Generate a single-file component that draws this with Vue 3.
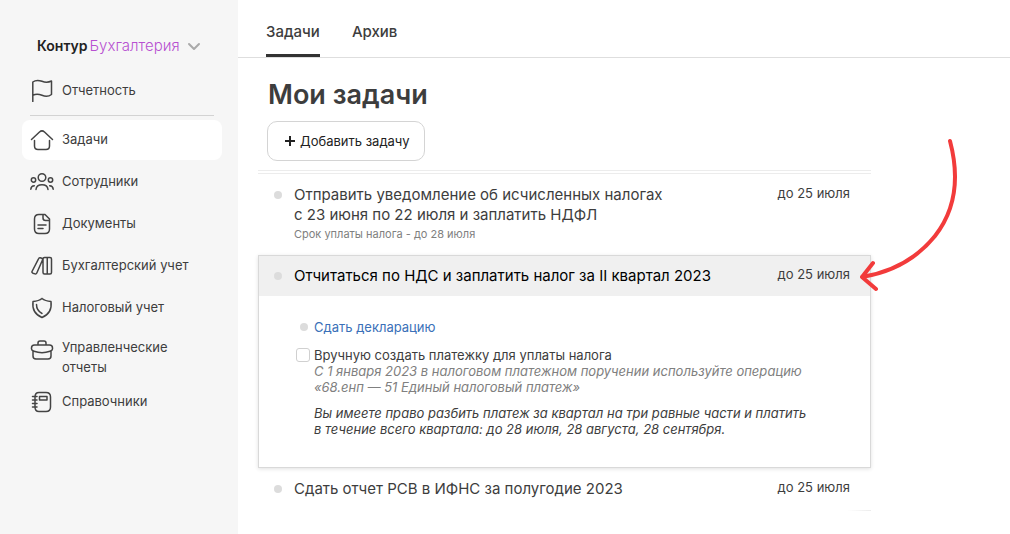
<script setup>
import { ref } from 'vue'

const sections = [
  { label: 'Задачи', icon: 'home', active: true },
  { label: 'Сотрудники', icon: 'people' },
  { label: 'Документы', icon: 'document' },
  { label: 'Бухгалтерский учет', icon: 'books' },
  { label: 'Налоговый учет', icon: 'shield' },
  { label: 'Управленческие отчеты', icon: 'case', tall: true },
  { label: 'Справочники', icon: 'notebook' },
]

const icons = {
  flag: 'M2.800 23.500V4C5.500 2 8.500 2 12 3.300C15 4.500 18.500 4.500 21.500 3V16.500C18.500 18.800 15.500 18.800 12 17.300C8.500 15.800 5.500 15.800 2.800 17.300',
  home: 'M1.500 11.500L9.500 4Q12 1.800 14.500 4L22.500 11.500M4.500 12.500V18Q4.500 21.500 8 21.500H16Q19.500 21.500 19.500 18V12.500',
  people: 'M8.200 7.500a3.800 3.800 0 1 0 7.600 0a3.800 3.800 0 1 0-7.600 0M1.300 10a2.200 2.200 0 1 0 4.400 0a2.200 2.200 0 1 0-4.400 0M18.300 10a2.200 2.200 0 1 0 4.400 0a2.200 2.200 0 1 0-4.400 0M6 19.500Q6.500 14.800 12 14.800T18 19.500M.800 19.300Q1 16 4.300 15.800M23.200 19.300Q23 16 19.700 15.800',
  document: 'M15 2.500H9Q4.500 2.500 4.500 7V17Q4.500 21.500 9 21.500H15Q19.500 21.500 19.500 17V7ZM13 2.800V6Q13 8.500 15.500 8.500H19.300M8 13H16M8 16.500H13',
  books: 'M14.500 3.500H20Q21.500 3.500 21.500 5V18.500Q21.500 20 20 20H14.500Q13 20 13 18.500V5Q13 3.500 14.500 3.500ZM17.250 3.500V20M8.500 4.800Q9 3.500 10.200 3.800L11.800 4.300Q13 4.800 12.500 6L6.800 19Q6.200 20.300 5 19.900L3 19.200Q1.500 18.600 2 17.500Z',
  shield: 'M12 2.500Q15 5 21 5.500Q22.500 17 12 21.500Q1.500 17 3 5.500Q9 5 12 2.500M6.500 8.500Q6.500 14.500 12 17.500',
  case: 'M4.500 7H19.500Q22.500 7 22.500 10V11Q22.500 12.500 20 13.300Q12 16 4 13.300Q1.500 12.500 1.500 11V10Q1.500 7 4.500 7ZM3 13V18Q3 21 6 21H18Q21 21 21 18V13M8 6.500V5Q8 3 10 3H14Q16 3 16 5V6.500',
  notebook: 'M9 2.500H16Q20.500 2.500 20.500 7V17Q20.500 21.500 16 21.500H9Q5 21.500 5 17V7Q5 2.500 9 2.500M9.500 6.500H17V10H9.500ZM2.500 6.500H7M2.500 10H7M2.500 13.500H7M2.500 17H7',
}

const manualPayment = ref(false)
</script>

<template>
  <div class="app">
    <aside class="sidebar">
      <button class="brand" type="button">
        <b>Контур</b><span>Бухгалтерия</span>
        <svg width="14" height="10" viewBox="0 0 14 10" aria-hidden="true"><path d="M2 3L7 8L12 3" /></svg>
      </button>
      <nav>
        <a class="item report" href="#reports">
          <svg class="icon" viewBox="0 0 24 24" aria-hidden="true"><path :d="icons.flag" /></svg>
          <span>Отчетность</span>
        </a>
        <hr />
        <a
          v-for="s in sections"
          :key="s.icon"
          class="item"
          :class="{ active: s.active, tall: s.tall }"
          :href="'#' + s.icon"
        >
          <svg class="icon" viewBox="0 0 24 24" aria-hidden="true"><path :d="icons[s.icon]" /></svg>
          <span>{{ s.label }}</span>
        </a>
      </nav>
    </aside>

    <main>
      <nav class="tabs">
        <a class="current" href="#tasks">Задачи</a>
        <a href="#archive">Архив</a>
      </nav>

      <div class="content">
        <h1>Мои задачи</h1>
        <button class="add" type="button">
          <svg width="12" height="12" viewBox="0 0 12 12" aria-hidden="true"><path d="M6 1V11M1 6H11" /></svg>
          Добавить задачу
        </button>

        <section class="tasks">
          <article class="row first">
            <i class="dot"></i>
            <div class="text">
              <h2>Отправить уведомление об исчисленных налогах<br />с 23 июня по 22 июля и заплатить НДФЛ</h2>
              <p class="term">Срок уплаты налога - до 28 июля</p>
            </div>
            <time>до 25 июля</time>
          </article>

          <article class="card">
            <header class="row">
              <i class="dot"></i>
              <h2 class="text">Отчитаться по НДС и заплатить налог за II квартал 2023</h2>
              <time>до 25 июля</time>
            </header>
            <div class="details">
              <div class="step">
                <i class="dot small"></i>
                <a href="#declaration">Сдать декларацию</a>
              </div>
              <div class="step">
                <input id="manual" v-model="manualPayment" type="checkbox" />
                <label for="manual">Вручную создать платежку для уплаты налога</label>
              </div>
              <div class="notes">
                <p class="muted">С 1 января 2023 в налоговом платежном поручении используйте операцию<br />«68.енп — 51 Единый налоговый платеж»</p>
                <p>Вы имеете право разбить платеж за квартал на три равные части и платить<br />в течение всего квартала: до 28 июля, 28 августа, 28 сентября.</p>
              </div>
            </div>
            <svg class="arrow" width="106" height="160" viewBox="0 0 106 160" aria-hidden="true">
              <path d="M94 6C103 40 101 73 79 101C62 122 37 137 6 142M17 128L6 142L20 154" />
            </svg>
          </article>

          <article class="row last">
            <i class="dot"></i>
            <h2 class="text">Сдать отчет РСВ в ИФНС за полугодие 2023</h2>
            <time>до 25 июля</time>
          </article>
        </section>
      </div>
    </main>
  </div>
</template>

<style>
body {
  margin: 0;
  background: #fff;
}
</style>

<style scoped>
.app {
  display: flex;
  min-height: 100vh;
  font: 13px/20px Inter, 'Liberation Sans', sans-serif;
  color: #3d3d3d;
}
a {
  color: inherit;
  text-decoration: none;
}
h1,
h2,
p {
  margin: 0;
}
button {
  font: inherit;
  cursor: pointer;
}
svg {
  fill: none;
  stroke-linecap: round;
  stroke-linejoin: round;
}

.sidebar {
  flex: 0 0 238px;
  box-sizing: border-box;
  padding: 36px 16px 0 22px;
  background: #f6f6f6;
}
.brand {
  display: flex;
  align-items: center;
  margin: 0 0 14px 15px;
  padding: 0;
  border: 0;
  background: none;
  color: #222;
  font-size: 14px;
}
.brand b {
  margin-right: 2px;
  font-weight: 600;
}
.brand span {
  color: #b750d1;
  font-size: 15px;
  font-weight: 300;
}
.brand svg {
  margin-left: 7px;
  stroke: #aaa;
  stroke-width: 2;
}
.item {
  display: flex;
  gap: 8px;
  margin-bottom: 2px;
  padding: 8px 20px 8px 8px;
  border-radius: 8px;
}
.item span {
  margin-top: 1px;
}
.report {
  margin: 0;
}
.report span {
  margin-top: 2px;
}
.active {
  background: #fff;
}
.tall {
  padding-bottom: 3px;
}
.tall span {
  margin-top: -1px;
}
.icon {
  flex: none;
  width: 24px;
  height: 24px;
  stroke: #444;
  stroke-width: 1.5;
}
hr {
  height: 1px;
  margin: 5px 8px 4px;
  border: 0;
  background: #d3d3d3;
}

main {
  flex: 1;
  min-width: 0;
}
.tabs {
  display: flex;
  gap: 32px;
  padding: 22px 28px 0;
  border-bottom: 1px solid #dedede;
  font-size: 15px;
  font-weight: 500;
}
.tabs a {
  padding-bottom: 12px;
  border-bottom: 3px solid transparent;
}
.tabs .current {
  border-color: #333;
}
.content {
  padding: 20px 20px 20px;
}
h1 {
  margin-left: 10px;
  font-size: 27px;
  line-height: 34px;
  font-weight: 600;
}
.add {
  display: flex;
  align-items: center;
  gap: 4px;
  height: 40px;
  margin: 9px 0 9px 9px;
  padding: 0 15px 0 16px;
  border: 1px solid #d4d4d4;
  border-radius: 10px;
  background: #fff;
  color: #222;
}
.add svg {
  stroke: #222;
  stroke-width: 2;
  stroke-linecap: butt;
}

.tasks {
  max-width: 613px;
  border-top: 4px double #ececec;
}
.row {
  display: flex;
  align-items: flex-start;
  padding: 10px 21px 10px 16px;
}
.row.first {
  padding-top: 11px;
  padding-bottom: 12px;
}
.row.last {
  padding-top: 11px;
  padding-bottom: 12px;
  background: linear-gradient(to left, #ececec, #fff) right bottom / 24px 1px no-repeat;
}
.dot {
  flex: none;
  width: 8px;
  height: 8px;
  margin: 6px 12px 0 0;
  border-radius: 50%;
  background: #dcdcdc;
}
.text {
  flex: 1;
}
h2 {
  font-size: 15px;
  line-height: 20px;
  font-weight: 400;
}
.term {
  font-size: 11px;
  line-height: 18px;
  color: #808080;
}
time {
  line-height: 16px;
}
.card {
  position: relative;
  border: 1px solid #d9d9d9;
  box-shadow: 0 1px 4px rgba(0, 0, 0, 0.12);
}
.card .row {
  padding-right: 20px;
  padding-left: 15px;
  background: #f0f0f0;
}
.card h2 {
  color: #000;
}
.details {
  padding: 21px 20px 20px 37px;
}
.step {
  display: flex;
  align-items: center;
  margin-bottom: 8px;
}
.step a {
  color: #3a70b8;
}
.step .small {
  margin: 0 6px 0 4px;
}
input {
  appearance: none;
  width: 14px;
  height: 14px;
  box-sizing: border-box;
  margin: 0 4px 0 0;
  border: 1px solid #d0d0d0;
  border-radius: 3px;
  background: #fff;
}
input:checked {
  background: #3072c4;
}
.notes {
  margin: -10px 0 0 18px;
  line-height: 16px;
  font-style: italic;
}
.notes p {
  margin-bottom: 10px;
}
.muted {
  color: #808080;
}
.arrow {
  position: absolute;
  top: -121px;
  right: -92px;
  stroke: #f23b3b;
  stroke-width: 4;
  pointer-events: none;
}
</style>
